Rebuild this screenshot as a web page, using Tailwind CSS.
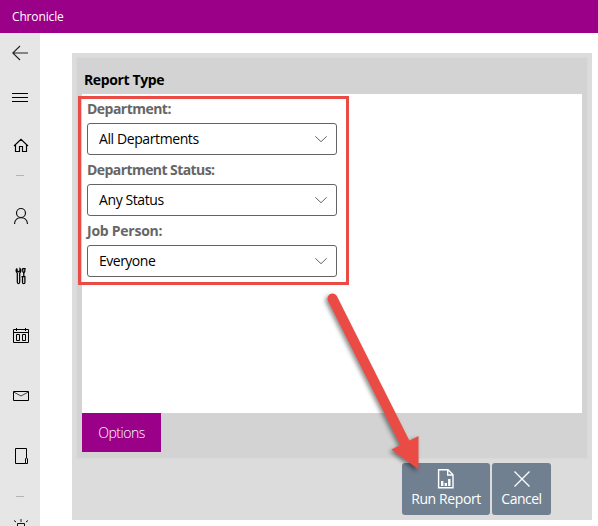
<!DOCTYPE html>
<html lang="en">
<head>
<meta charset="utf-8">
<title>Chronicle</title>
<script src="https://cdn.jsdelivr.net/npm/@tailwindcss/browser@4"></script>
</head>
<body class="relative flex h-[526px] w-[598px] flex-col overflow-hidden bg-white font-['Open_Sans','Noto_Sans',sans-serif] text-[14px] text-black">
<header class="flex h-[33px] shrink-0 items-center bg-[#9b0089] pl-3 text-[12px] text-white"><span class="tracking-[-0.15px]">Chronicle</span></header>
<div class="flex h-[493px]">
  <nav class="flex w-10 shrink-0 flex-col overflow-hidden bg-[#e6e6e6] *:shrink-0">
    <svg class="h-10 w-10" viewBox="0 33 40 40" fill="none" stroke="#222" stroke-width="1.1"><path d="M28 53H13M20 46l-7.200 7 7.200 7"/></svg>
    <svg class="h-12 w-10" viewBox="0 73 40 48" fill="none" stroke="#000"><path d="M12 93.500h16M12 97.500h16M12 101.500h16"/></svg>
    <svg class="h-12 w-10" viewBox="0 121 40 48" fill="none" stroke="#000" stroke-width="1.150"><path d="M14 146l7-6.700 7 6.700M15.500 145v6.500h4v-5h3v5h4V145"/></svg>
    <svg class="h-[17px] w-10" viewBox="0 169 40 17" stroke="#b5b5b5"><path d="M16 175.500h8"/></svg>
    <svg class="h-[60px] w-10" viewBox="0 186 40 60" fill="none" stroke="#111" stroke-width="1.200"><circle cx="21" cy="213" r="4.500"/><path d="M14.500 224c.3-8.600 12.700-8.600 13 0"/></svg>
    <svg class="h-[60px] w-10" viewBox="0 246 40 60" fill="none" stroke="#000" stroke-width="1.250"><path d="M17 268.600v2.200l1.500 1 1.500-1v-2.200c1.300 1 1.300 3.400-.3 4.400v9c0 2-2.400 2-2.400 0v-9c-1.600-1-1.600-3.400-.3-4.400M22.500 268.500h2.500l-.3 3.200-.9 1.300v4M22.500 268.500l.4 3.200.8 1.300M21.500 276.500h4M22.500 277v5.500c0 1.600 2.400 1.600 2.400 0V277"/></svg>
    <svg class="h-[60px] w-10" viewBox="0 306 40 60" fill="none" stroke="#000"><path d="M13.500 329.500h15v13h-15zM13 332.500h16M16.500 328v3M25.500 328v3M16.500 334.500h3v6h-3zM22.500 334.500h3v6h-3z"/></svg>
    <svg class="h-[60px] w-10" viewBox="0 366 40 60" fill="none" stroke="#000"><path d="M13.500 391.500h15v9h-15z"/><path d="M14 392.200l7 3.800 7-3.800" stroke="#444"/></svg>
    <svg class="h-[60px] w-10" viewBox="0 426 40 60" fill="none" stroke="#000"><path d="M25.500 463.500h-10v-15h11v9.500M25.500 463.500v-4.500c0-1.300 2-1.300 2 0v4.500z"/></svg>
    <svg class="h-5 w-10" viewBox="0 486 40 20" stroke="#b5b5b5"><path d="M16 496.500h8"/></svg>
    <svg class="h-5 w-10" viewBox="0 506 40 20" fill="none" stroke="#111"><path d="M17.500 526v-2.500h7v2.500M14 520.500l2 1.500M28 520.500l-2 1.500"/><path d="M21 519v3" stroke="#777" stroke-width="1.800"/></svg>
  </nav>
  <main class="mt-5 ml-8 flex h-[467px] w-[520px] flex-col bg-[#dcdcdc] p-[5px]">
    <section class="flex h-[400px] flex-col bg-[#d3d3d3] px-[5px] shadow-[0_0_2px_#d3d3d3]">
      <h1 class="h-9 pt-3 pl-[2px] text-[14px] leading-5 font-bold"><span class="tracking-[-0.38px]">Report Type</span></h1>
      <form class="h-[319px] bg-white pl-[5px] leading-5">
        <div class="h-[61px] pt-[5px]">
          <label class="block h-6 font-bold text-[#666]"><span class="tracking-[-0.53px]">Department:</span></label>
          <div class="flex h-8 w-[250px] items-center justify-between rounded-[3px] border border-[#646464] pr-[9px] pl-[11px]"><span class="tracking-[-0.4px]">All Departments</span><svg class="h-3 w-3" viewBox="0 0 12 12" fill="none" stroke="#666"><path d="M.3 3.300L6 8.700l5.700-5.400"/></svg></div>
        </div>
        <div class="h-[61px] pt-[5px]">
          <label class="block h-6 font-bold text-[#666]"><span class="tracking-[-0.57px]">Department Status:</span></label>
          <div class="flex h-8 w-[250px] items-center justify-between rounded-[3px] border border-[#646464] pr-[9px] pl-[11px]"><span class="tracking-[-0.4px]">Any Status</span><svg class="h-3 w-3" viewBox="0 0 12 12" fill="none" stroke="#666"><path d="M.3 3.300L6 8.700l5.700-5.400"/></svg></div>
        </div>
        <div class="h-[61px] pt-[5px]">
          <label class="block h-6 font-bold text-[#666]"><span class="tracking-[-0.25px]">Job Person:</span></label>
          <div class="flex h-8 w-[250px] items-center justify-between rounded-[3px] border border-[#646464] pr-[9px] pl-[11px]"><span class="tracking-[-0.5px]">Everyone</span><svg class="h-3 w-3" viewBox="0 0 12 12" fill="none" stroke="#666"><path d="M.3 3.300L6 8.700l5.700-5.400"/></svg></div>
        </div>
      </form>
      <button type="button" class="flex h-[39px] w-[79px] items-center justify-center bg-[#9b0089] font-light text-white"><span class="tracking-[-0.5px]">Options</span></button>
    </section>
    <footer class="mt-[5px] flex justify-end gap-[2px] pr-9 leading-5 text-white">
      <button type="button" class="flex h-[52px] w-[88px] flex-col items-center rounded-[3px] bg-[#708090] pt-[5px]"><svg class="h-[22px] w-[22px] shrink-0" viewBox="0 0 22 22" fill="none" stroke="#fff" stroke-width="1.400"><path d="M3.600 1.700H13l5 5v13H3.600zM12.700 1.700V7H18"/><path d="M7.200 13v5M10.800 15v3M14.300 11v7" stroke-width="2.400"/></svg><span class="mt-[-1px] tracking-[-0.4px]">Run Report</span></button>
      <button type="button" class="flex h-[52px] w-[59px] flex-col items-center rounded-[3px] bg-[#708090] pt-[5px]"><svg class="h-[22px] w-[22px] shrink-0" viewBox="0 0 22 22" fill="none" stroke="#fff" stroke-width="1.300"><path d="M3.500 3.500l15 15M18.500 3.500l-15 15"/></svg><span class="mt-[-1px] tracking-[-0.5px]">Cancel</span></button>
    </footer>
  </main>
</div>
<div class="pointer-events-none absolute top-[96px] left-[78px] h-[189px] w-[271px] border-3 border-[#eb4b45]"></div>
<svg class="pointer-events-none absolute inset-0 h-[526px] w-[598px] drop-shadow-[-2px_2px_2px_rgba(0,0,0,0.45)]" viewBox="0 0 598 526"><path d="M332.500 298.500L405 443" stroke="#eb4b45" stroke-width="10" stroke-linecap="round"/><path d="M391.500 449.500L418.500 436V469.500z" fill="#eb4b45"/></svg>
</body>
</html>
